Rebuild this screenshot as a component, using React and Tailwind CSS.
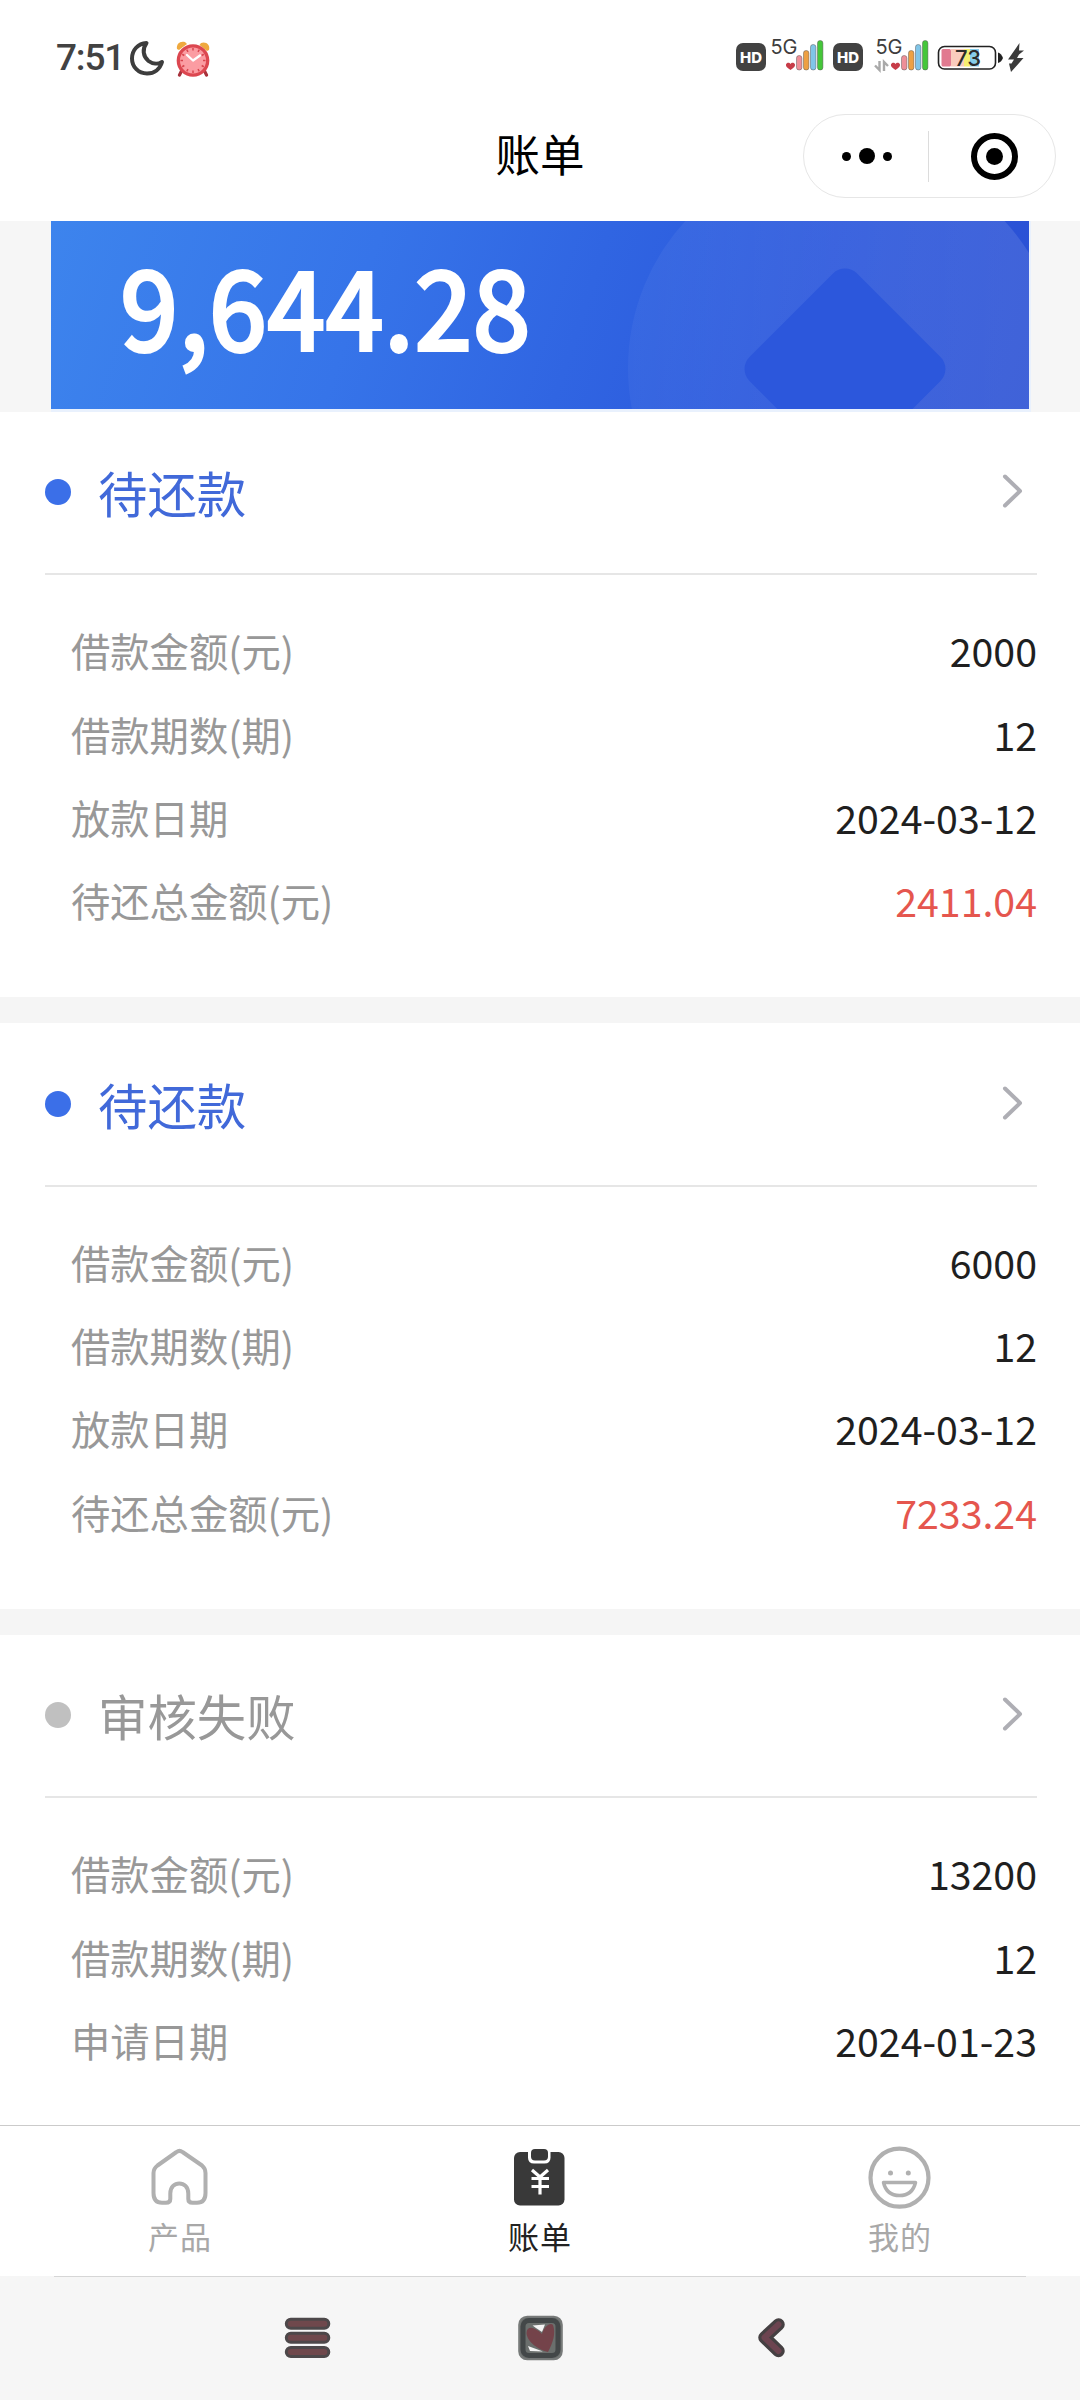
const bills = [
  {
    status: '待还款',
    active: true,
    rows: [
      ['借款金额(元)', '2000'],
      ['借款期数(期)', '12'],
      ['放款日期', '2024-03-12'],
      ['待还总金额(元)', '2411.04', true],
    ],
  },
  {
    status: '待还款',
    active: true,
    rows: [
      ['借款金额(元)', '6000'],
      ['借款期数(期)', '12'],
      ['放款日期', '2024-03-12'],
      ['待还总金额(元)', '7233.24', true],
    ],
  },
  {
    status: '审核失败',
    active: false,
    rows: [
      ['借款金额(元)', '13200'],
      ['借款期数(期)', '12'],
      ['申请日期', '2024-01-23'],
    ],
  },
];

function Moon() {
  return (
    <svg className="ml-[9px] h-[36px] w-[36px]" viewBox="0 0 36 36" fill="none">
      <path
        d="M17.500 3C9 3.500 3 10 3 18.500C3 27 9.500 33.500 18 33.500C25.500 33.500 31 29 33 22C29 24.500 23.500 24 19.500 21C14 16.500 13 9 17.500 3Z"
        stroke="#3d3d3d"
        strokeWidth="4"
        strokeLinejoin="round"
      />
    </svg>
  );
}

function Alarm() {
  const ticks = [0, 30, 60, 90, 120, 150, 180, 210, 240, 270, 300, 330];
  return (
    <svg className="ml-[9px] h-[38px] w-[38px]" viewBox="0 0 38 38" fill="none">
      <path d="M8 31L5.500 36M30 31L32.500 36" stroke="#a8323c" strokeWidth="3.200" strokeLinecap="round" />
      <path d="M3 10C2 5 6 1.500 11 3L13 5L5 11Z" fill="#efa93f" />
      <path d="M35 11C36.500 6 32 2 27 4L25.500 6L33 12Z" fill="#efa93f" />
      <circle cx="19" cy="21.500" r="14.700" fill="#fb9ca2" stroke="#dc4750" strokeWidth="3.300" />
      {ticks.map((a) => (
        <path key={a} d="M19 9V11.500" stroke="#d8454e" strokeWidth="1.500" transform={`rotate(${a} 19 21.500)`} />
      ))}
      <path d="M13 16L19 21.500L26 16.500" stroke="#fff" strokeWidth="2.300" strokeLinecap="round" strokeLinejoin="round" />
    </svg>
  );
}

function HdBadge() {
  return (
    <span className="flex h-[28px] w-[30px] items-center justify-center rounded-[7px] bg-[#424242] font-['Inter',sans-serif] text-[15px] leading-none font-extrabold text-white">
      HD
    </span>
  );
}

function Signal({ transfer }) {
  return (
    <svg className="h-[46px] w-[60px]" viewBox="0 -10 60 46">
      <text x="4.500" y="16.300" fontSize="20" textLength="27" fontFamily="Inter, sans-serif" fill="#3d3d3d">
        5G
      </text>
      {transfer && (
        <g stroke="#a9a9a9" strokeWidth="2.400" fill="none">
          <path d="M8.500 23V32L4 27.500" />
          <path d="M13 33V24L17 28" />
        </g>
      )}
      <path
        d="M24.500 32C21.500 30 19.500 28.500 20 26.500C20.700 24.300 23.500 24.300 24.500 26C25.500 24.300 28.300 24.300 29 26.500C29.300 28.500 27.500 30 24.500 32Z"
        fill="#c73c48"
      />
      <g stroke="#555" strokeOpacity=".6" strokeWidth=".8">
        <rect x="30.500" y="17.500" width="5.400" height="14.500" rx="2.600" fill="#ee8f98" />
        <rect x="37.500" y="12.500" width="5.400" height="19.500" rx="2.600" fill="#eda043" />
        <rect x="44.500" y="6.500" width="5.400" height="25.500" rx="2.600" fill="#80c5e8" />
        <rect x="51.500" y="2.500" width="5.400" height="29.500" rx="2.600" fill="#45c63a" />
      </g>
    </svg>
  );
}

function Battery() {
  return (
    <svg className="h-[36px] w-[90px]" viewBox="0 0 90 36">
      <rect x="2.500" y="8.500" width="57" height="22.500" rx="6" fill="#fff" stroke="#222" strokeWidth="1.600" />
      <rect x="5.500" y="11" width="9.500" height="17.500" rx="1.500" fill="#e17a90" />
      <rect x="15" y="11" width="13" height="17.500" fill="#f9cbbd" />
      <rect x="28" y="11" width="6" height="17.500" fill="#f5ee70" />
      <rect x="34" y="11" width="9" height="17.500" fill="#86cdea" />
      <path d="M62 14.500C64.500 15 66 17.500 67 20C66 22.500 64.500 24.500 62 25Z" fill="#222" />
      <text x="19" y="27.600" fontSize="22" textLength="26" fontWeight="500" fontFamily="Inter, sans-serif" fill="#2b2b2b">
        73
      </text>
      <path d="M83.500 5L72 21.500H78L75.500 25.500H73L75 34L87.500 20H81L83 16.500L88 12.500H83Z" fill="#3a3a3a" />
    </svg>
  );
}

function StatusBar() {
  return (
    <div className="flex h-[92px] items-start justify-between pt-[28px] pr-[54px] pl-[56px]">
      <div className="mt-[10px] flex h-[40px] items-center">
        <span className="w-[64px] font-['Roboto',sans-serif] text-[37px] leading-[40px] font-medium tracking-[-1.200px] whitespace-nowrap text-[#424242]">
          7:51
        </span>
        <Moon />
        <Alarm />
      </div>
      <div className="flex h-[50px] items-start">
        <div className="pt-[15px]"><HdBadge /></div>
        <Signal />
        <div className="ml-[7px] pt-[15px]"><HdBadge /></div>
        <div className="ml-[8px]"><Signal transfer /></div>
        <div className="ml-[5px] pt-[10px]"><Battery /></div>
      </div>
    </div>
  );
}

function Capsule() {
  return (
    <div className="flex h-[84px] w-[253px] items-center rounded-full border-[1.500px] border-[#e6e6e6] bg-white">
      <div className="flex flex-1 items-center justify-center gap-[8px] pl-[2px]">
        <span className="size-[9px] rounded-full bg-black" />
        <span className="size-[16px] rounded-full bg-black" />
        <span className="size-[9px] rounded-full bg-black" />
      </div>
      <span className="h-[51px] w-px bg-[#dcdcdc]" />
      <div className="flex flex-1 items-center justify-center pl-[5px]">
        <span className="flex size-[47px] items-center justify-center rounded-full border-[6px] border-black">
          <span className="size-[17px] rounded-full bg-black" />
        </span>
      </div>
    </div>
  );
}

function TitleBar() {
  return (
    <div className="grid h-[129px] grid-cols-3 items-start">
      <span />
      <h1 className="pt-[31px] text-center text-[44.500px] leading-[60px] font-normal text-black">账单</h1>
      <div className="flex justify-end pt-[22px] pr-[24px]">
        <Capsule />
      </div>
    </div>
  );
}

function Banner() {
  return (
    <div className="h-[190.500px] bg-[#f6f6f6] pl-[51px]">
      <div className="h-[190.500px] w-[980px] bg-[#e9f1fd]">
        <div className="relative h-[188px] w-[978px] overflow-hidden bg-linear-[108deg,#3d84ed_0%,#3674e9_32%,#3065e2_54%,#2b57dc_76%,#2a50d4_100%]">
          <svg className="absolute top-0 left-0" width="978" height="188" viewBox="51 221 978 188">
            <defs>
              <linearGradient id="disc" x1="0" y1="0" x2="1" y2="0">
                <stop offset="0" stopColor="#fff" stopOpacity=".04" />
                <stop offset=".6" stopColor="#fff" stopOpacity=".09" />
                <stop offset="1" stopColor="#fff" stopOpacity=".11" />
              </linearGradient>
            </defs>
            <circle cx="845" cy="368" r="217" fill="url(#disc)" />
            <rect x="769" y="293" width="152" height="152" rx="17" fill="#2c57dc" transform="rotate(45 845 369)" />
          </svg>
          <div className="relative w-max origin-left scale-x-[.93] pt-[26px] pl-[74px] text-[111px] leading-[112px] font-medium tracking-[-0.500px] whitespace-nowrap text-white [-webkit-text-stroke:2px_white]">
            9,644.28
          </div>
        </div>
      </div>
    </div>
  );
}

function BillCard({ bill }) {
  return (
    <section className="h-[585.600px] bg-white pr-[43px] pl-[45px]">
      <header className="flex h-[163.500px] items-center border-b-2 border-[#e6e6e6]">
        <span className={bill.active ? 'size-[26px] rounded-full bg-[#3b6fe8]' : 'size-[26px] rounded-full bg-[#c0c0c0]'} />
        <h2
          className={
            bill.active
              ? 'ml-[27px] text-[49.400px] leading-[60px] font-normal text-[#4169d9]'
              : 'ml-[27px] text-[49.400px] leading-[60px] font-normal text-[#989898]'
          }
        >
          {bill.status}
        </h2>
        <svg className="mr-[12px] ml-auto h-[36px] w-[24px]" viewBox="0 0 24 36" fill="none">
          <path d="M4 2.500L19 17L4 31.500" stroke="#aeaeb4" strokeWidth="4" strokeLinecap="round" strokeLinejoin="round" />
        </svg>
      </header>
      <dl className="pt-[33.600px] pl-[26px]">
        {bill.rows.map(([label, value, due]) => (
          <div key={label} className="flex h-[83.300px] items-center justify-between text-[39.300px] leading-[60px]">
            <dt className="text-[#989898]">{label}</dt>
            <dd className={due ? 'text-[#e5564e]' : 'text-[#1f1f1f]'}>{value}</dd>
          </div>
        ))}
      </dl>
    </section>
  );
}

function HomeIcon() {
  return (
    <svg width="64" height="64" viewBox="0 0 64 64" fill="none">
      <path
        d="M28.500 7Q31.500 4.800 34.500 7L54 20.500Q57.500 23.500 57.500 28V48Q57.500 57.800 49 57.800H44.500Q40.300 57.800 40.300 54V48.500C40.300 35 22.300 35 22.300 48.500V54Q22.300 57.800 18 57.800H14Q5.500 57.800 5.500 48V28Q5.500 23.500 9.500 20.500Z"
        stroke="#b0b0b0"
        strokeWidth="4"
        strokeLinejoin="round"
      />
    </svg>
  );
}

function BillIcon() {
  return (
    <svg width="64" height="64" viewBox="0 0 64 64" fill="none">
      <rect x="6" y="7" width="50.500" height="53.500" rx="6" fill="#393939" />
      <path d="M20 6V12.500Q20 18.500 26 18.500H36.500Q42.500 18.500 42.500 12.500V6Z" fill="#fff" />
      <rect x="23" y="4" width="17" height="11.500" rx="4" fill="#393939" />
      <path d="M24 25L32 32L40 25M23.500 33.500H41M23.500 41.500H41M32 32V49.500" stroke="#fff" strokeWidth="3.200" />
    </svg>
  );
}

function SmileIcon() {
  return (
    <svg width="64" height="64" viewBox="0 0 64 64" fill="none">
      <circle cx="31.500" cy="32.700" r="29" stroke="#b0b0b0" strokeWidth="4.200" />
      <circle cx="22.500" cy="28" r="2.500" fill="#b0b0b0" />
      <circle cx="40.300" cy="28" r="2.500" fill="#b0b0b0" />
      <path d="M15.500 37.500H47.500C45.500 46 39.500 50.500 31.500 50.500C23.500 50.500 17.500 46 15.500 37.500Z" stroke="#b0b0b0" strokeWidth="3.500" strokeLinejoin="round" />
    </svg>
  );
}

function TabBar() {
  const tabs = [
    { name: '产品', icon: <HomeIcon />, text: 'text-[#a8a8a8]' },
    { name: '账单', icon: <BillIcon />, text: 'text-[#222222]' },
    { name: '我的', icon: <SmileIcon />, text: 'text-[#a8a8a8]' },
  ];
  return (
    <nav className="grid h-[151px] grid-cols-3 border-t border-[#cbcbcb] bg-white">
      {tabs.map((t) => (
        <div key={t.name} className="flex flex-col items-center pt-[19px]">
          {t.icon}
          <span className={`${t.text} mt-[4px] text-[31px] leading-[46px] tracking-[1px]`}>{t.name}</span>
        </div>
      ))}
    </nav>
  );
}

function SystemNav() {
  return (
    <div className="h-[124px] bg-[#f6f6f6]">
      <div className="mx-[54px] h-px bg-[#d6d6d6]" />
      <div className="flex items-center pt-[38px] pl-[284px]">
        <svg width="48" height="48" viewBox="0 0 48 48">
          {[4.3, 18.3, 32.5].map((y) => (
            <rect key={y} x="2.300" y={y} width="42.500" height="9" rx="4.500" fill="#6f484c" stroke="#4d484a" strokeWidth="3" />
          ))}
        </svg>
        <svg className="ml-[185px]" width="48" height="48" viewBox="0 0 48 48">
          <rect x="2.200" y="1.700" width="42.600" height="42.600" rx="8" fill="#6b6f6d" stroke="#777a79" strokeWidth="2" />
          <rect x="6" y="5.500" width="35" height="35" rx="6" fill="#6b6f6d" stroke="#434748" strokeWidth="5" />
          <path d="M15.500 10.500L28 9.500L25 17L19 13ZM11 31L26 36.500L13 36Z" fill="#f4f4f4" />
          <path d="M31 37C22 35 10 27 9.500 18C10 10 18 12 25 19C27 12 33 7 36 10C39 18 36 28 31 37Z" fill="#74434a" />
        </svg>
        <svg className="ml-[189px]" width="36" height="48" viewBox="0 0 36 48" fill="none">
          <path d="M24.500 9.500L10.500 22.500L24.500 36" stroke="#454042" strokeWidth="12.500" strokeLinecap="round" strokeLinejoin="round" />
          <path d="M24.500 9.500L10.500 22.500L24.500 36" stroke="#6c4450" strokeWidth="6" strokeLinecap="round" strokeLinejoin="round" />
        </svg>
      </div>
    </div>
  );
}

export default function App() {
  return (
    <div className="flex h-[2400px] w-[1080px] flex-col overflow-hidden bg-white font-['Noto_Sans_CJK_SC',sans-serif]">
      <div className="shrink-0">
        <StatusBar />
        <TitleBar />
      </div>
      <main className="flex min-h-0 flex-1 flex-col overflow-hidden">
        <div className="shrink-0"><Banner /></div>
        <div className="flex shrink-0 flex-col gap-[26px] bg-[#f5f5f5]">
          {bills.map((b, i) => (
            <BillCard key={i} bill={b} />
          ))}
        </div>
      </main>
      <div className="shrink-0">
        <TabBar />
        <SystemNav />
      </div>
    </div>
  );
}
